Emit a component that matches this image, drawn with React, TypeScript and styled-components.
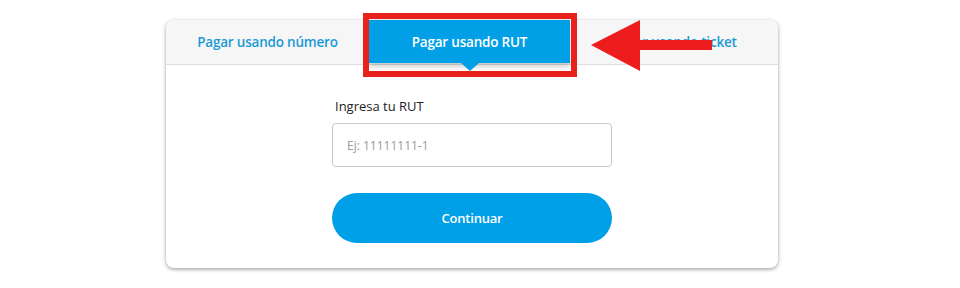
import { createGlobalStyle, styled } from "styled-components";

const GlobalStyle = createGlobalStyle`
  html, body {
    margin: 0;
    padding: 0;
    background: #fff;
    font-family: "Open Sans", "Noto Sans", Arial, sans-serif;
  }
`;

const Page = styled.div`
  position: relative;
  width: 960px;
  height: 288px;
  padding: 20px 0 0 166px;
  box-sizing: border-box;
  overflow: hidden;
`;

const Card = styled.div`
  width: 612px;
  height: 248px;
  box-sizing: border-box;
  background: #fff;
  border-radius: 8px;
  box-shadow: 0 1px 4px rgba(0, 0, 0, 0.28), 0 2px 3px rgba(0, 0, 0, 0.12);
  display: flex;
  flex-direction: column;
`;

const TabBar = styled.div`
  display: grid;
  grid-template-columns: 203px 201px 1fr;
  height: 45px;
  background: #f6f6f6;
  border-bottom: 1px solid #dedede;
  border-radius: 8px 8px 0 0;
  box-sizing: border-box;
`;

const Tab = styled.div<{ $active?: boolean }>`
  position: relative;
  display: flex;
  align-items: center;
  justify-content: center;
  height: ${(p) => (p.$active ? "43px" : "44px")};
  font-size: 13.5px;
  font-weight: 600;
  letter-spacing: -0.2px;
  color: ${(p) => (p.$active ? "#fff" : "#1b9ad6")};
  background: ${(p) => (p.$active ? "#009fe6" : "transparent")};
  box-shadow: ${(p) => (p.$active ? "0 4px 5px rgba(0,0,0,0.18)" : "none")};

  &::after {
    content: "";
    display: ${(p) => (p.$active ? "block" : "none")};
    position: absolute;
    left: 50%;
    bottom: -8px;
    margin-left: -9px;
    border-left: 9px solid transparent;
    border-right: 9px solid transparent;
    border-top: 8px solid #009fe6;
  }
`;

const Body = styled.div`
  flex: 1;
  display: flex;
  justify-content: center;
  padding-top: 32px;
`;

const Form = styled.div`
  width: 280px;
  display: flex;
  flex-direction: column;
`;

const Label = styled.label`
  font-size: 13px;
  color: #222;
  padding-left: 3px;
  margin-bottom: 8px;
  line-height: 18px;
`;

const Input = styled.input`
  height: 44px;
  box-sizing: border-box;
  border: 1px solid #c9c9c9;
  border-radius: 4px;
  padding: 0 14px;
  font-family: "Open Sans", "Noto Sans", Arial, sans-serif;
  font-size: 12px;
  outline: none;
  color: #333;

  &::placeholder {
    color: #9a9a9a;
  }
`;

const Button = styled.button`
  margin-top: 26px;
  height: 50px;
  border: none;
  border-radius: 25px;
  background: #00a0e9;
  color: #fff;
  font-family: "Open Sans", "Noto Sans", Arial, sans-serif;
  font-size: 13px;
  font-weight: 600;
  letter-spacing: -0.2px;
  cursor: pointer;
`;

const Highlight = styled.div`
  position: absolute;
  left: 363px;
  top: 13px;
  width: 214px;
  height: 64px;
  box-sizing: border-box;
  border: 6px solid #e8211d;
  pointer-events: none;
`;

const Arrow = styled.svg`
  position: absolute;
  left: 588px;
  top: 18px;
  pointer-events: none;
`;

export default function App() {
  return (
    <>
      <GlobalStyle />
      <Page>
        <Card>
          <TabBar>
            <Tab>Pagar usando número</Tab>
            <Tab $active>Pagar usando RUT</Tab>
            <Tab>Pagar usando ticket</Tab>
          </TabBar>
          <Body>
            <Form>
              <Label>Ingresa tu RUT</Label>
              <Input placeholder="Ej: 11111111-1" />
              <Button>Continuar</Button>
            </Form>
          </Body>
        </Card>
        <Highlight />
        <Arrow width="128" height="56" viewBox="0 0 128 56">
          <polygon points="3,27 52,2 52,22 124,22 124,32 52,32 52,53" fill="#ee1d1d" />
        </Arrow>
      </Page>
    </>
  );
}
